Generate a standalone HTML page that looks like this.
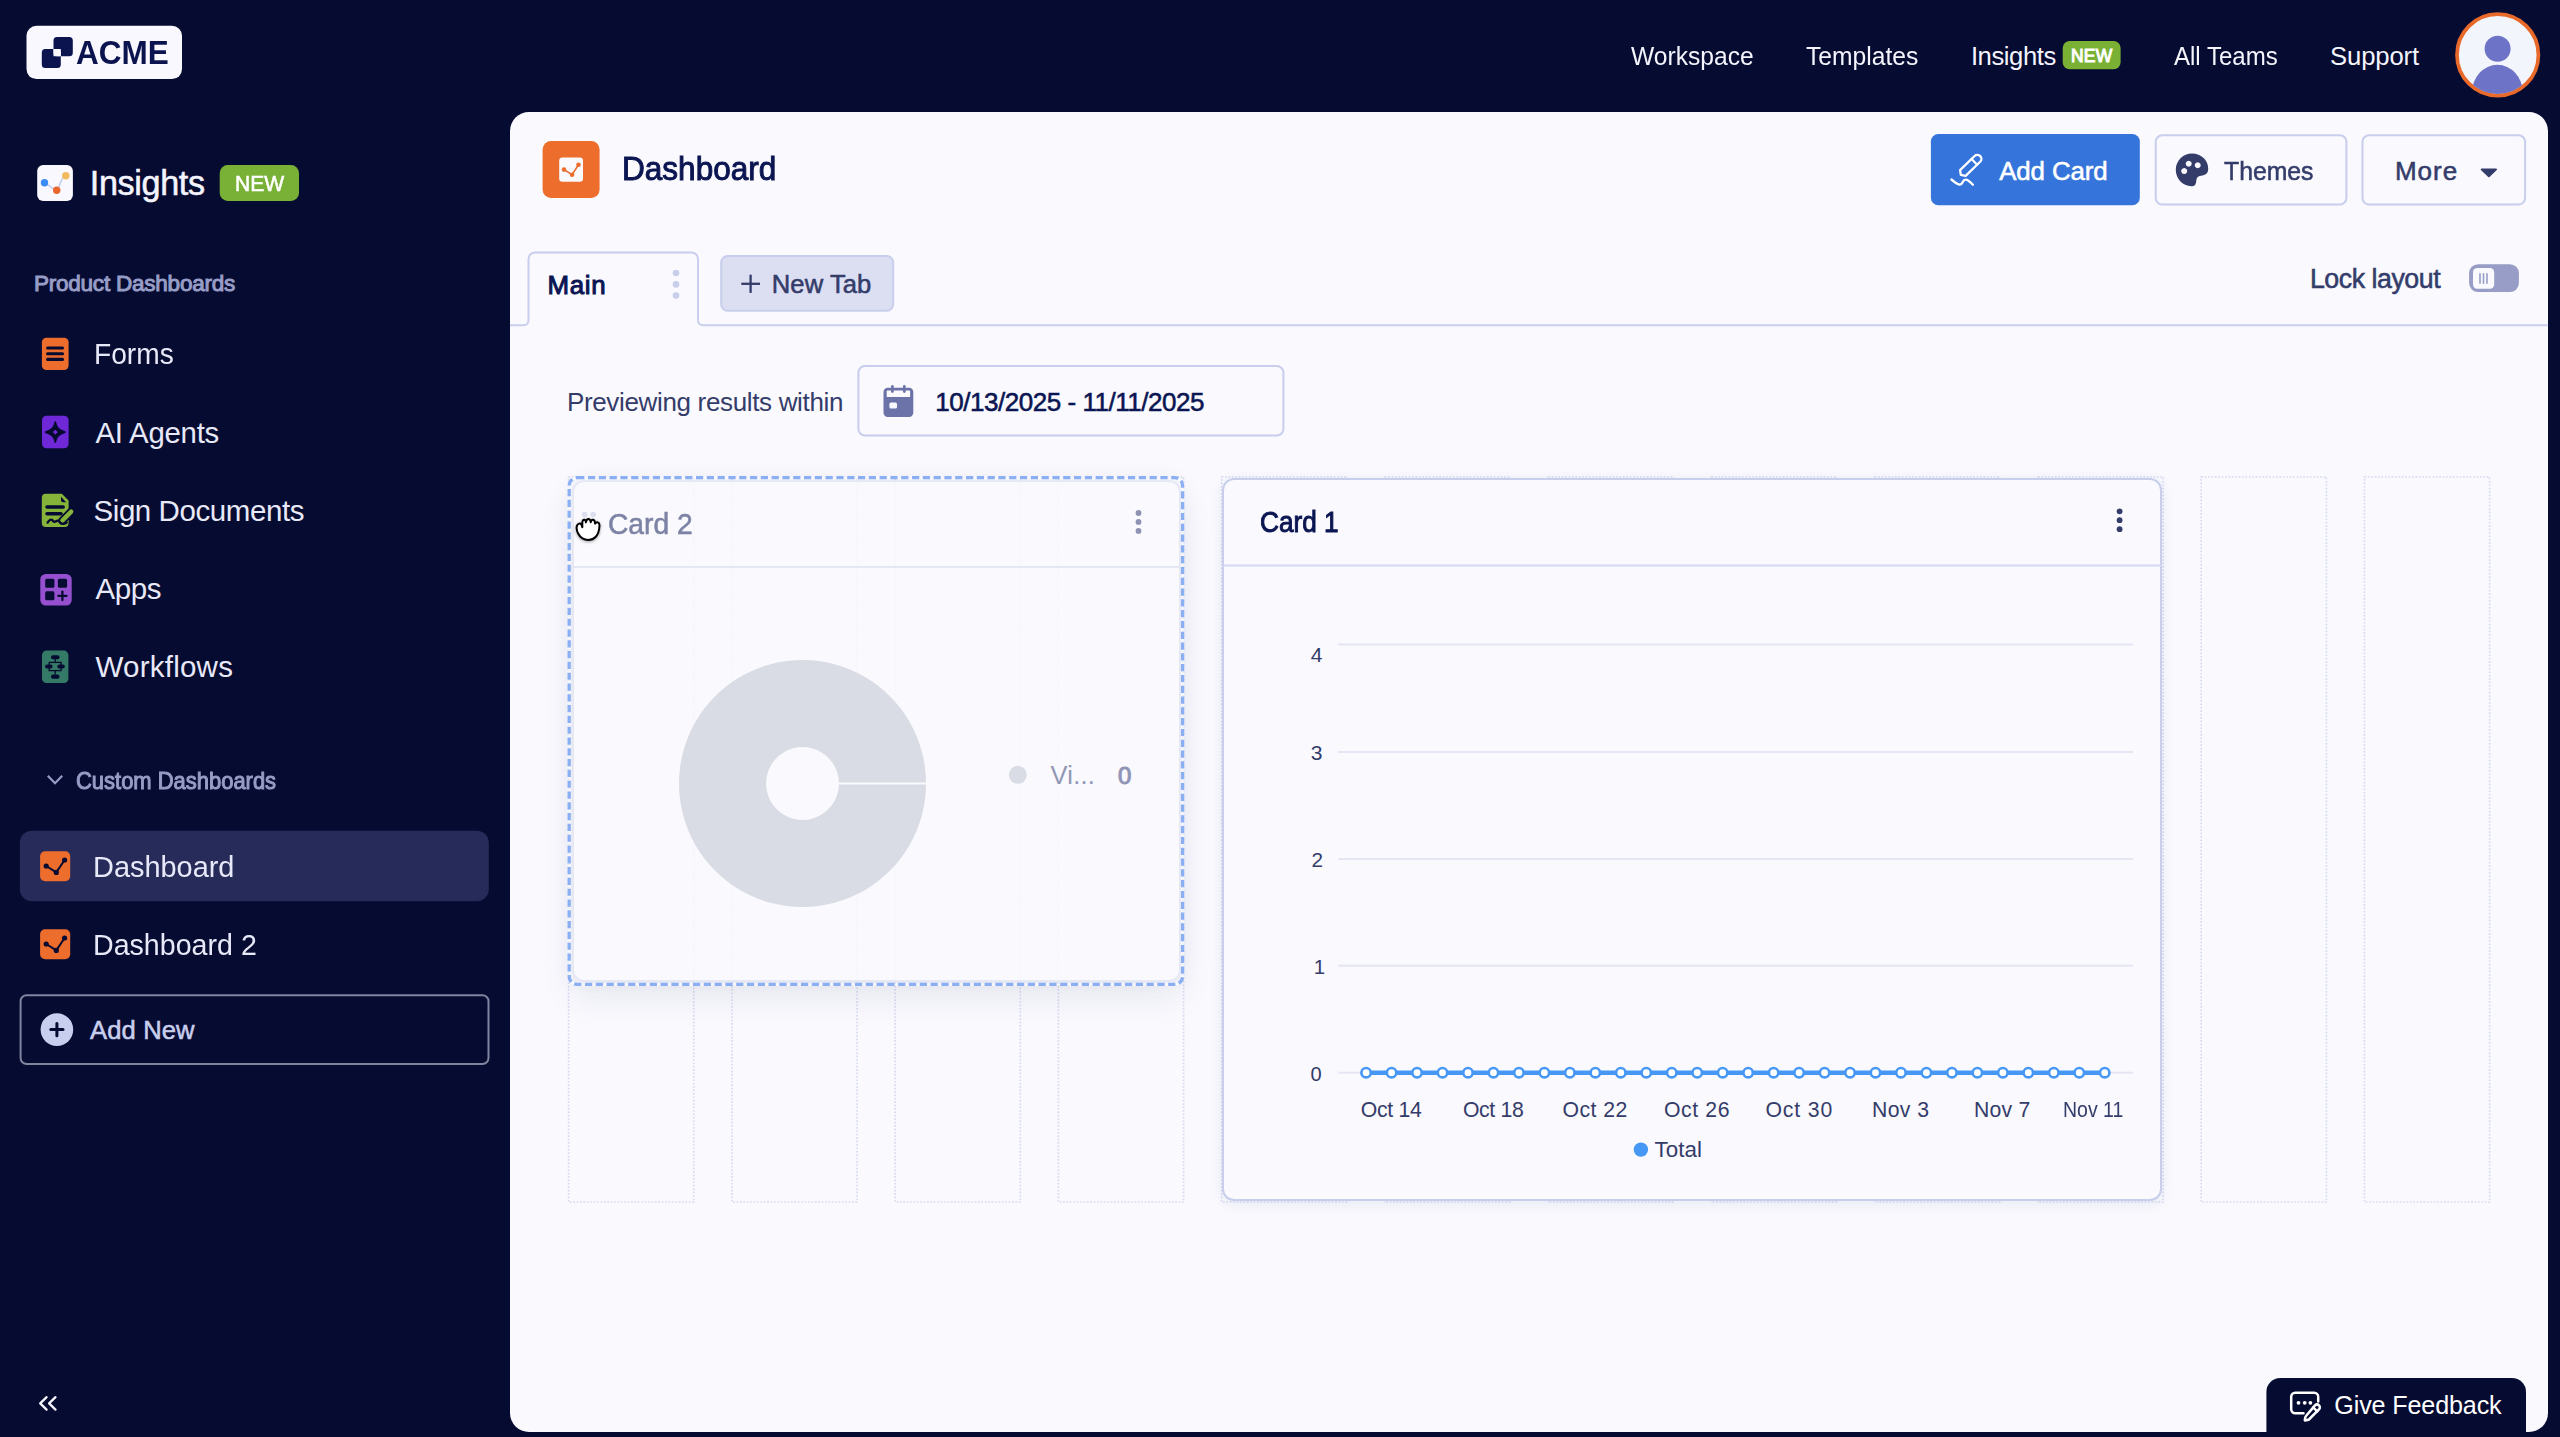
<!DOCTYPE html>
<html><head><meta charset="utf-8"><title>Dashboard</title>
<style>
html,body{margin:0;padding:0;}
body{width:2560px;height:1437px;overflow:hidden;position:relative;background:#060B31;font-family:"Liberation Sans",sans-serif;}
.t{position:absolute;white-space:pre;}
.s{position:absolute;overflow:visible;}
.panel{position:absolute;left:510.4px;top:112px;width:2037.2px;height:1319.6px;background:#F9F9FE;border-radius:19px;}
.col{position:absolute;top:476.2px;height:726.6px;box-sizing:border-box;border:2px dotted #DADDF0;}
.card1{position:absolute;left:1222.2px;top:477.8px;width:939.5px;height:723.4px;box-sizing:border-box;border:2px solid #C8CEEC;border-radius:12px;background:#F9F9FE;box-shadow:0 3px 14px rgba(40,50,110,0.08);}
.c2shadow{position:absolute;left:571.8px;top:480.2px;width:608.8px;height:502.2px;border-radius:12px;box-shadow:0 16px 36px rgba(30,35,80,0.07), 0 0 24px rgba(30,35,80,0.05);}
.c2wrap{position:absolute;left:0;top:0;width:2560px;height:1437px;opacity:0.5;}
.card2bg{position:absolute;left:571.8px;top:480.2px;width:608.8px;height:502.2px;box-sizing:border-box;border:2px solid #E6E8F5;border-radius:12px;background:rgba(249,249,254,0.85);}
</style></head>
<body>
<svg class="s" style="left:0px;top:0px;" width="520" height="110" viewBox="0 0 520 110">
<rect x="26.5" y="25.8" width="155.5" height="53.3" rx="10" fill="#F8F8FE"/>
<path fill-rule="evenodd" fill="#0C1450" d="M45.3 49 h12 a3.5 3.5 0 0 1 3.5 3.5 V64.5 a3.5 3.5 0 0 1 -3.5 3.5 h-12 a3.5 3.5 0 0 1 -3.5 -3.5 V52.5 a3.5 3.5 0 0 1 3.5 -3.5 Z
M57 37 h12.3 a3.5 3.5 0 0 1 3.5 3.5 V52.7 a3.5 3.5 0 0 1 -3.5 3.5 H57 a3.5 3.5 0 0 1 -3.5 -3.5 V40.5 a3.5 3.5 0 0 1 3.5 -3.5 Z"/>
<rect x="53.5" y="49" width="7.3" height="7.2" fill="#F8F8FE"/>
</svg>
<div class="t" style="left:75.84px;top:37.31px;font-size:32.849px;line-height:32.849px;letter-spacing:0.000px;color:#0C1450;font-weight:bold;transform:scaleX(0.9596);transform-origin:0 0;">ACME</div>
<div class="t" style="left:1630.60px;top:43.56px;font-size:25.655px;line-height:25.655px;letter-spacing:0.000px;color:#F4F4FD;font-weight:normal;transform:scaleX(0.9598);transform-origin:0 0;">Workspace</div>
<div class="t" style="left:1806.04px;top:43.56px;font-size:25.655px;line-height:25.655px;letter-spacing:0.000px;color:#F4F4FD;font-weight:normal;transform:scaleX(0.9609);transform-origin:0 0;">Templates</div>
<div class="t" style="left:1970.90px;top:43.56px;font-size:25.655px;line-height:25.655px;letter-spacing:-0.429px;color:#F4F4FD;font-weight:normal;">Insights</div>
<div class="t" style="left:2174.40px;top:43.56px;font-size:25.655px;line-height:25.655px;letter-spacing:0.000px;color:#F4F4FD;font-weight:normal;transform:scaleX(0.9373);transform-origin:0 0;">All Teams</div>
<div class="t" style="left:2330.00px;top:43.56px;font-size:25.655px;line-height:25.655px;letter-spacing:-0.117px;color:#F4F4FD;font-weight:normal;">Support</div>
<svg class="s" style="left:2040px;top:0px;" width="520" height="110" viewBox="2040 0 520 110">
<rect x="2062.7" y="41" width="57.9" height="28.2" rx="7" fill="#7AB134"/>
<circle cx="2497.7" cy="54.9" r="40.7" fill="#F3F5FC" stroke="#E8692A" stroke-width="3.7"/>
<clipPath id="avc"><circle cx="2497.7" cy="54.9" r="39"/></clipPath>
<g clip-path="url(#avc)" fill="#6D73C6">
<circle cx="2497.6" cy="48.8" r="13"/>
<ellipse cx="2497.4" cy="92.6" rx="25.4" ry="27.8"/>
</g>
</svg>
<div class="t" style="left:2070.90px;top:47.56px;font-size:17.442px;line-height:17.442px;letter-spacing:0.300px;color:#FFFFFF;font-weight:normal;-webkit-text-stroke:1.0px #FFFFFF;">NEW</div>
<svg class="s" style="left:0px;top:150px;" width="520" height="560" viewBox="0 150 520 560">
<rect x="37.2" y="165.1" width="35.7" height="35.8" rx="6" fill="#F8F8FE"/>
<path d="M44.5 182.8 C48.5 184.2 53 190.4 56.7 190.2 C59.8 190 59.8 177.2 65.8 175.7" fill="none" stroke="#C8CEED" stroke-width="1.6"/>
<circle cx="44.5" cy="182.8" r="3.7" fill="#3C8CF6"/>
<circle cx="56.7" cy="190.2" r="3.7" fill="#E9672C"/>
<circle cx="65.8" cy="175.7" r="3.7" fill="#F2BA5C"/>
<rect x="219.7" y="165.1" width="79.3" height="35.8" rx="8" fill="#78B135"/>
<!-- forms -->
<rect x="41.9" y="337.8" width="26.7" height="32.2" rx="4.5" fill="#EC6D2C"/>
<g stroke="#060B31" stroke-width="3.1" stroke-linecap="round">
<line x1="47.6" y1="348" x2="62.5" y2="348"/><line x1="47.6" y1="353.7" x2="62.5" y2="353.7"/><line x1="47.6" y1="359.4" x2="62.5" y2="359.4"/>
</g>
<!-- ai agents -->
<rect x="42" y="415.8" width="26.6" height="32.4" rx="4.5" fill="#6F28D8"/>
<path fill-rule="evenodd" fill="#060B31" stroke="#060B31" stroke-width="1.8" stroke-linejoin="round" d="M55.3 422.2 C56.3 427.6 58.2 429.8 64.9 432.1 C58.2 434.4 56.3 436.6 55.3 442 C54.3 436.6 52.4 434.4 45.7 432.1 C52.4 429.8 54.3 427.6 55.3 422.2 Z M55.3 428.4 L59 432.1 L55.3 435.8 L51.6 432.1 Z"/>
<!-- sign documents -->
<path fill="#86B43A" d="M45.8 493.8 H61.8 L68.6 500.6 V522.9 a4 4 0 0 1 -4 4 H45.8 a4 4 0 0 1 -4 -4 V497.8 a4 4 0 0 1 4 -4 Z"/>
<path fill="#060B31" d="M61 496.8 L66.2 502.2 L63 502.2 a2 2 0 0 1 -2 -2 Z"/>
<g stroke="#060B31" stroke-width="3.5" stroke-linecap="round" fill="none">
<line x1="47" y1="507" x2="63.2" y2="507"/><line x1="47" y1="513.7" x2="61" y2="513.7"/>
</g>
<line x1="62.3" y1="520.6" x2="71.2" y2="511.6" stroke="#060B31" stroke-width="8" stroke-linecap="round"/>
<line x1="62.3" y1="520.6" x2="71.2" y2="511.6" stroke="#86B43A" stroke-width="4.4" stroke-linecap="round"/>
<path d="M47.6 522.6 Q50 518.6 52.3 520 Q53.6 522.8 56 521.3 Q58.6 519.6 60.4 522.8 Q62.6 525 66.6 522.6" fill="none" stroke="#060B31" stroke-width="2.4" stroke-linecap="round"/>
<!-- apps -->
<rect x="40.3" y="574" width="31.4" height="31.6" rx="5.5" fill="#9550D0"/>
<g fill="#060B31">
<rect x="45.2" y="578.7" width="9.2" height="9.1" rx="1.6"/>
<rect x="57.9" y="578.7" width="9.2" height="9.1" rx="1.6"/>
<rect x="45.2" y="591.3" width="9.2" height="9" rx="1.6"/>
</g>
<g stroke="#060B31" stroke-width="2.3" stroke-linecap="round">
<line x1="58.3" y1="595.8" x2="66.6" y2="595.8"/><line x1="62.4" y1="591.6" x2="62.4" y2="600"/>
</g>
<!-- workflows -->
<rect x="42" y="650.6" width="26.4" height="32.5" rx="4.5" fill="#347A66"/>
<g fill="#060B31">
<rect x="51" y="655.3" width="8.5" height="3.9" rx="1.9"/>
<rect x="45.1" y="664.4" width="7.5" height="4.1" rx="2"/>
<rect x="57.3" y="664.4" width="7.5" height="4.1" rx="2"/>
<rect x="51" y="674.5" width="8.5" height="4.2" rx="2"/>
</g>
<g stroke="#060B31" stroke-width="1.3" fill="none">
<line x1="55.2" y1="659" x2="55.2" y2="662.5"/>
<rect x="49.2" y="662.4" width="11.9" height="8.2"/>
<line x1="55.2" y1="670.6" x2="55.2" y2="674.6"/>
</g>
</svg>
<div class="t" style="left:89.80px;top:165.96px;font-size:34.158px;line-height:34.158px;letter-spacing:-0.343px;color:#F4F4FD;font-weight:normal;-webkit-text-stroke:0.55px #F4F4FD;">Insights</div>
<div class="t" style="left:234.63px;top:172.95px;font-size:21.657px;line-height:21.657px;letter-spacing:0.000px;color:#FFFFFF;font-weight:normal;-webkit-text-stroke:0.55px #FFFFFF;transform:scaleX(0.9740);transform-origin:0 0;">NEW</div>
<div class="t" style="left:33.90px;top:272.76px;font-size:22.529px;line-height:22.529px;letter-spacing:-0.224px;color:#979DC6;font-weight:normal;-webkit-text-stroke:1.0px #979DC6;">Product Dashboards</div>
<div class="t" style="left:93.59px;top:339.26px;font-size:29.506px;line-height:29.506px;letter-spacing:0.000px;color:#E8E9F8;font-weight:normal;transform:scaleX(0.9543);transform-origin:0 0;">Forms</div>
<div class="t" style="left:95.50px;top:418.06px;font-size:29.361px;line-height:29.361px;letter-spacing:-0.238px;color:#E8E9F8;font-weight:normal;">AI Agents</div>
<div class="t" style="left:93.50px;top:495.66px;font-size:29.506px;line-height:29.506px;letter-spacing:-0.423px;color:#E8E9F8;font-weight:normal;">Sign Documents</div>
<div class="t" style="left:95.50px;top:574.26px;font-size:29.506px;line-height:29.506px;letter-spacing:-0.433px;color:#E8E9F8;font-weight:normal;">Apps</div>
<div class="t" style="left:95.50px;top:652.26px;font-size:29.506px;line-height:29.506px;letter-spacing:0.238px;color:#E8E9F8;font-weight:normal;">Workflows</div>
<svg class="s" style="left:0px;top:740px;" width="520" height="700" viewBox="0 740 520 700">
<polyline points="47.8,775.8 55,783.2 62.2,775.8" fill="none" stroke="#979DC6" stroke-width="2.2"/>
<rect x="19.8" y="830.8" width="469" height="70.4" rx="12" fill="#262B59"/>
<rect x="40.1" y="851.2" width="30.1" height="30" rx="5" fill="#EC6D2C"/>
<polyline points="46.2,866.0 56.3,872.4000000000001 64.6,860.0" fill="none" stroke="#060B31" stroke-width="2"/>
<circle cx="46.2" cy="866.0" r="2.6" fill="#060B31"/><circle cx="56.3" cy="872.4000000000001" r="2.6" fill="#060B31"/><circle cx="64.6" cy="860.0" r="2.6" fill="#060B31"/>
<rect x="40.1" y="929.2" width="30.1" height="30" rx="5" fill="#EC6D2C"/>
<polyline points="46.2,944.0 56.3,950.4000000000001 64.6,938.0" fill="none" stroke="#060B31" stroke-width="2"/>
<circle cx="46.2" cy="944.0" r="2.6" fill="#060B31"/><circle cx="56.3" cy="950.4000000000001" r="2.6" fill="#060B31"/><circle cx="64.6" cy="938.0" r="2.6" fill="#060B31"/>
<rect x="20.6" y="995.2" width="467.9" height="68.8" rx="6" fill="none" stroke="#80849F" stroke-width="2"/>
<circle cx="56.9" cy="1029.6" r="16.3" fill="#C8CEED"/>
<g stroke="#060B31" stroke-width="3" stroke-linecap="round">
<line x1="50.8" y1="1029.6" x2="63" y2="1029.6"/><line x1="56.9" y1="1023.5" x2="56.9" y2="1035.7"/>
</g>
<g fill="none" stroke="#F4F4FD" stroke-width="2.3" stroke-linecap="round" stroke-linejoin="round">
<polyline points="46.6,1397.2 40.2,1403.4 46.6,1409.6"/>
<polyline points="55.5,1397.2 49.1,1403.4 55.5,1409.6"/>
</g>
</svg>
<div class="t" style="left:76.46px;top:770.06px;font-size:23.256px;line-height:23.256px;letter-spacing:0.000px;color:#979DC6;font-weight:normal;-webkit-text-stroke:1.0px #979DC6;transform:scaleX(0.9441);transform-origin:0 0;">Custom Dashboards</div>
<div class="t" style="left:92.93px;top:852.06px;font-size:30.233px;line-height:30.233px;letter-spacing:0.000px;color:#E8E9F8;font-weight:normal;transform:scaleX(0.9566);transform-origin:0 0;">Dashboard</div>
<div class="t" style="left:92.96px;top:929.66px;font-size:30.233px;line-height:30.233px;letter-spacing:0.000px;color:#E8E9F8;font-weight:normal;transform:scaleX(0.9467);transform-origin:0 0;">Dashboard 2</div>
<div class="t" style="left:90.00px;top:1018.26px;font-size:25.582px;line-height:25.582px;letter-spacing:0.133px;color:#C8CEED;font-weight:normal;-webkit-text-stroke:0.55px #C8CEED;">Add New</div>
<div class="panel"></div>
<svg class="s" style="left:530px;top:130px;" width="1000" height="90" viewBox="530 130 1000 90">
<rect x="542.6" y="141.1" width="57" height="57" rx="8.5" fill="#EC6D2C"/>
<rect x="559.2" y="157.6" width="23.8" height="24.2" rx="3.2" fill="#F9F9FE"/>
<polyline points="564,169.6 572.1,174.7 578.5,164.7" fill="none" stroke="#EC6D2C" stroke-width="1.6"/>
<circle cx="564" cy="169.6" r="2.3" fill="#EC6D2C"/><circle cx="572.1" cy="174.7" r="2.3" fill="#EC6D2C"/><circle cx="578.5" cy="164.7" r="2.3" fill="#EC6D2C"/>
</svg>
<div class="t" style="left:621.52px;top:152.36px;font-size:33.576px;line-height:33.576px;letter-spacing:0.000px;color:#0A1551;font-weight:normal;-webkit-text-stroke:1.0px #0A1551;transform:scaleX(0.9398);transform-origin:0 0;">Dashboard</div>
<svg class="s" style="left:1920px;top:125px;" width="640" height="100" viewBox="1920 125 640 100">
<rect x="1930.9" y="134" width="208.9" height="71.2" rx="7.5" fill="#3574DA"/>
<g fill="none" stroke="#FFFFFF" stroke-width="2.3" stroke-linecap="round" stroke-linejoin="round">
<g transform="translate(1960.4 175.3) rotate(-44)">
<path d="M0.6 0 L3.4 -4 H23.6 a4 4 0 0 1 0 8 H3.4 Z"/>
<line x1="19.4" y1="-4" x2="19.4" y2="4"/>
</g>
<path d="M1951.4 179.5 C1955 182.5 1957.8 184.8 1960 184.6 C1962.8 184.4 1962.6 179.8 1965.4 179.6 C1967.6 179.4 1970.5 182.2 1972.9 184.7"/>
</g>
<rect x="2155.7" y="135.3" width="190.7" height="69.2" rx="6.5" fill="none" stroke="#C8CEEC" stroke-width="2"/>
<path fill="#343C6A" fill-rule="evenodd" d="M2192 153.5 C2201.5 153.5 2208.2 160.5 2208.2 168.5 C2208.2 173.6 2205.5 175.2 2201 175.8 C2197.8 176.3 2196.6 177.6 2196.2 181.4 C2195.7 185.2 2194.3 186.2 2191.6 186.2 C2182.3 186 2175.8 178.7 2175.8 169.8 C2175.8 160.8 2183 153.5 2192 153.5 Z
M2188.7 160.8 a3 3 0 1 0 0.01 0 Z M2197.7 162.3 a3 3 0 1 0 0.01 0 Z M2184.2 168.1 a3 3 0 1 0 0.01 0 Z"/>
<rect x="2362.5" y="135.3" width="162.6" height="69.2" rx="6.5" fill="none" stroke="#C8CEEC" stroke-width="2"/>
<path d="M2481.5 168.6 H2496.2 a0.8 0.8 0 0 1 0.6 1.3 L2489.5 177 a0.9 0.9 0 0 1 -1.3 0 L2480.9 169.9 a0.8 0.8 0 0 1 0.6 -1.3 Z" fill="#343C6A"/>
</svg>
<div class="t" style="left:1999.20px;top:158.56px;font-size:25.873px;line-height:25.873px;letter-spacing:-0.100px;color:#FFFFFF;font-weight:normal;-webkit-text-stroke:0.55px #FFFFFF;">Add Card</div>
<div class="t" style="left:2224.40px;top:157.56px;font-size:26.018px;line-height:26.018px;letter-spacing:0.000px;color:#343C6A;font-weight:normal;-webkit-text-stroke:0.55px #343C6A;transform:scaleX(0.9527);transform-origin:0 0;">Themes</div>
<div class="t" style="left:2394.90px;top:157.56px;font-size:26.018px;line-height:26.018px;letter-spacing:1.000px;color:#343C6A;font-weight:normal;-webkit-text-stroke:0.55px #343C6A;">More</div>
<svg class="s" style="left:510px;top:240px;" width="2040" height="90" viewBox="510 240 2040 90">
<path d="M510 325.2 H523.5 a5 5 0 0 0 5 -5 V259 a6.5 6.5 0 0 1 6.5 -6.5 H691.5 a6.5 6.5 0 0 1 6.5 6.5 V320.2 a5 5 0 0 0 5 5 H2547.5" fill="none" stroke="#C8CEEC" stroke-width="2"/>
<g fill="#C8CEEC"><circle cx="676" cy="273" r="3.3"/><circle cx="676" cy="284.4" r="3.3"/><circle cx="676" cy="295.6" r="3.3"/></g>
<rect x="721.2" y="256" width="172" height="54.8" rx="6.5" fill="#DCDFF2" stroke="#C8CEEC" stroke-width="2"/>
<g stroke="#343C6A" stroke-width="2.3" stroke-linecap="butt">
<line x1="741.3" y1="283.8" x2="760" y2="283.8"/><line x1="750.6" y1="274.7" x2="750.6" y2="292.9"/>
</g>
<rect x="2469.1" y="264.2" width="49.8" height="27.9" rx="9" fill="#979DC6"/>
<rect x="2473" y="268" width="21.2" height="20.8" rx="4.2" fill="#F9F9FE"/>
<g stroke="#979DC6" stroke-width="1.6"><line x1="2480" y1="273.2" x2="2480" y2="283.8"/><line x1="2483.5" y1="273.2" x2="2483.5" y2="283.8"/><line x1="2487" y1="273.2" x2="2487" y2="283.8"/></g>
</svg>
<div class="t" style="left:547.50px;top:273.06px;font-size:25.873px;line-height:25.873px;letter-spacing:0.667px;color:#0A1551;font-weight:normal;-webkit-text-stroke:1.0px #0A1551;">Main</div>
<div class="t" style="left:771.80px;top:272.46px;font-size:25.582px;line-height:25.582px;letter-spacing:0.083px;color:#343C6A;font-weight:normal;-webkit-text-stroke:0.55px #343C6A;">New Tab</div>
<div class="t" style="left:2309.90px;top:266.26px;font-size:26.745px;line-height:26.745px;letter-spacing:-0.450px;color:#343C6A;font-weight:normal;-webkit-text-stroke:0.55px #343C6A;">Lock layout</div>
<svg class="s" style="left:850px;top:360px;" width="450" height="80" viewBox="850 360 450 80">
<rect x="858.4" y="366.1" width="425" height="69.3" rx="6.5" fill="none" stroke="#C8CEEC" stroke-width="2"/>
<path fill="#6C73A8" fill-rule="evenodd" d="M887.7 387.8 H909.1 a4.2 4.2 0 0 1 4.2 4.2 V412.8 a4.2 4.2 0 0 1 -4.2 4.2 H887.7 a4.2 4.2 0 0 1 -4.2 -4.2 V392 a4.2 4.2 0 0 1 4.2 -4.2 Z
M887.6 390.4 H909.2 a0.9 0.9 0 0 1 0.9 0.9 V396.9 H886.7 V391.3 a0.9 0.9 0 0 1 0.9 -0.9 Z
M890.9 402.5 H895.5 a1.5 1.5 0 0 1 1.5 1.5 V406.9 a1.5 1.5 0 0 1 -1.5 1.5 H890.9 a1.5 1.5 0 0 1 -1.5 -1.5 V404 a1.5 1.5 0 0 1 1.5 -1.5 Z"/>
<g stroke="#6C73A8" stroke-width="2.7" stroke-linecap="round"><line x1="892.4" y1="386.4" x2="892.4" y2="391.6"/><line x1="904.3" y1="386.4" x2="904.3" y2="391.6"/></g>
</svg>
<div class="t" style="left:566.90px;top:388.56px;font-size:26.018px;line-height:26.018px;letter-spacing:-0.338px;color:#343C6A;font-weight:normal;">Previewing results within</div>
<div class="t" style="left:935.20px;top:388.56px;font-size:26.018px;line-height:26.018px;letter-spacing:-0.464px;color:#0A1551;font-weight:normal;-webkit-text-stroke:0.55px #0A1551;">10/13/2025 - 11/11/2025</div>
<svg class="s" style="left:550px;top:460px;" width="1960" height="760" viewBox="550 460 1960 760"><g fill="none" stroke="#D6DAEE" stroke-width="1.6" stroke-dasharray="1.7 1.7"><rect x="568.60" y="477" width="125.20" height="725" /><rect x="731.86" y="477" width="125.20" height="725" /><rect x="895.12" y="477" width="125.20" height="725" /><rect x="1058.38" y="477" width="125.20" height="725" /><rect x="1221.64" y="477" width="125.20" height="725" /><rect x="1384.90" y="477" width="125.20" height="725" /><rect x="1548.16" y="477" width="125.20" height="725" /><rect x="1711.42" y="477" width="125.20" height="725" /><rect x="1874.68" y="477" width="125.20" height="725" /><rect x="2037.94" y="477" width="125.20" height="725" /><rect x="2201.20" y="477" width="125.20" height="725" /><rect x="2364.46" y="477" width="125.20" height="725" /></g></svg>
<div class="card1"></div>
<svg class="s" style="left:1222px;top:478px;" width="942" height="724" viewBox="1222 478 942 724">
<line x1="1223" y1="565.4" x2="2161" y2="565.4" stroke="#D5DAF0" stroke-width="2"/>
<g fill="#343C6A"><circle cx="2119.6" cy="511.3" r="2.9"/><circle cx="2119.6" cy="520.2" r="2.9"/><circle cx="2119.6" cy="529.2" r="2.9"/></g>
<g stroke="#E4E6F4" stroke-width="2"><line x1="1338.1" y1="644.5" x2="2133" y2="644.5"/><line x1="1338.1" y1="752" x2="2133" y2="752"/><line x1="1338.1" y1="858.9" x2="2133" y2="858.9"/><line x1="1338.1" y1="965.7" x2="2133" y2="965.7"/><line x1="1338.1" y1="1072.7" x2="2133" y2="1072.7"/></g>
<line x1="1366.10" y1="1072.7" x2="2104.73" y2="1072.7" stroke="#4797F5" stroke-width="4.6"/>
<g fill="#FFFFFF" stroke="#4797F5" stroke-width="2.6"><circle cx="1366.10" cy="1072.7" r="4.7"/><circle cx="1391.57" cy="1072.7" r="4.7"/><circle cx="1417.04" cy="1072.7" r="4.7"/><circle cx="1442.51" cy="1072.7" r="4.7"/><circle cx="1467.98" cy="1072.7" r="4.7"/><circle cx="1493.45" cy="1072.7" r="4.7"/><circle cx="1518.92" cy="1072.7" r="4.7"/><circle cx="1544.39" cy="1072.7" r="4.7"/><circle cx="1569.86" cy="1072.7" r="4.7"/><circle cx="1595.33" cy="1072.7" r="4.7"/><circle cx="1620.80" cy="1072.7" r="4.7"/><circle cx="1646.27" cy="1072.7" r="4.7"/><circle cx="1671.74" cy="1072.7" r="4.7"/><circle cx="1697.21" cy="1072.7" r="4.7"/><circle cx="1722.68" cy="1072.7" r="4.7"/><circle cx="1748.15" cy="1072.7" r="4.7"/><circle cx="1773.62" cy="1072.7" r="4.7"/><circle cx="1799.09" cy="1072.7" r="4.7"/><circle cx="1824.56" cy="1072.7" r="4.7"/><circle cx="1850.03" cy="1072.7" r="4.7"/><circle cx="1875.50" cy="1072.7" r="4.7"/><circle cx="1900.97" cy="1072.7" r="4.7"/><circle cx="1926.44" cy="1072.7" r="4.7"/><circle cx="1951.91" cy="1072.7" r="4.7"/><circle cx="1977.38" cy="1072.7" r="4.7"/><circle cx="2002.85" cy="1072.7" r="4.7"/><circle cx="2028.32" cy="1072.7" r="4.7"/><circle cx="2053.79" cy="1072.7" r="4.7"/><circle cx="2079.26" cy="1072.7" r="4.7"/><circle cx="2104.73" cy="1072.7" r="4.7"/></g>
<circle cx="1640.9" cy="1149.6" r="7.2" fill="#4797F5"/>
</svg>
<div class="t" style="left:1259.73px;top:507.46px;font-size:30.233px;line-height:30.233px;letter-spacing:0.000px;color:#0A1551;font-weight:normal;-webkit-text-stroke:1.0px #0A1551;transform:scaleX(0.8674);transform-origin:0 0;">Card 1</div>
<div class="t" style="left:1310.70px;top:644.46px;font-size:21.076px;line-height:21.076px;letter-spacing:0.000px;color:#343C6A;font-weight:normal;">4</div>
<div class="t" style="left:1310.70px;top:742.46px;font-size:21.076px;line-height:21.076px;letter-spacing:0.000px;color:#343C6A;font-weight:normal;">3</div>
<div class="t" style="left:1311.60px;top:849.86px;font-size:20.785px;line-height:20.785px;letter-spacing:0.000px;color:#343C6A;font-weight:normal;">2</div>
<div class="t" style="left:1313.70px;top:957.26px;font-size:20.495px;line-height:20.495px;letter-spacing:0.000px;color:#343C6A;font-weight:normal;">1</div>
<div class="t" style="left:1310.50px;top:1064.06px;font-size:20.058px;line-height:20.058px;letter-spacing:0.000px;color:#343C6A;font-weight:normal;">0</div>
<div class="t" style="left:1360.80px;top:1099.16px;font-size:21.221px;line-height:21.221px;letter-spacing:-0.280px;color:#343C6A;font-weight:normal;">Oct 14</div>
<div class="t" style="left:1462.90px;top:1099.16px;font-size:21.221px;line-height:21.221px;letter-spacing:-0.340px;color:#343C6A;font-weight:normal;">Oct 18</div>
<div class="t" style="left:1562.50px;top:1099.16px;font-size:21.221px;line-height:21.221px;letter-spacing:0.460px;color:#343C6A;font-weight:normal;">Oct 22</div>
<div class="t" style="left:1664.00px;top:1099.16px;font-size:21.221px;line-height:21.221px;letter-spacing:0.600px;color:#343C6A;font-weight:normal;">Oct 26</div>
<div class="t" style="left:1765.40px;top:1099.16px;font-size:21.221px;line-height:21.221px;letter-spacing:0.860px;color:#343C6A;font-weight:normal;">Oct 30</div>
<div class="t" style="left:1872.00px;top:1099.16px;font-size:21.221px;line-height:21.221px;letter-spacing:0.375px;color:#343C6A;font-weight:normal;">Nov 3</div>
<div class="t" style="left:1974.00px;top:1099.16px;font-size:21.221px;line-height:21.221px;letter-spacing:0.200px;color:#343C6A;font-weight:normal;">Nov 7</div>
<div class="t" style="left:2062.86px;top:1099.16px;font-size:21.221px;line-height:21.221px;letter-spacing:0.000px;color:#343C6A;font-weight:normal;transform:scaleX(0.9190);transform-origin:0 0;">Nov 11</div>
<div class="t" style="left:1654.60px;top:1139.46px;font-size:22.384px;line-height:22.384px;letter-spacing:0.000px;color:#343C6A;font-weight:normal;">Total</div>
<div class="c2shadow"></div>
<div class="card2bg"></div>
<svg class="s" style="left:560px;top:470px;" width="640" height="530" viewBox="560 470 640 530">
<line x1="573" y1="567" x2="1181" y2="567" stroke="#E4E7F4" stroke-width="2"/>
<g fill="#8E93B3"><circle cx="1138.5" cy="513" r="2.9"/><circle cx="1138.5" cy="521.9" r="2.9"/><circle cx="1138.5" cy="530.9" r="2.9"/></g>
<g fill="#DCDFF0"><circle cx="584.6" cy="514.6" r="2.8"/><circle cx="593.2" cy="514.6" r="2.8"/><circle cx="584.6" cy="523.4" r="2.8"/><circle cx="593.2" cy="523.4" r="2.8"/><circle cx="584.6" cy="532.2" r="2.8"/><circle cx="593.2" cy="532.2" r="2.8"/></g>
<path fill-rule="evenodd" fill="#D9DCE4" d="M802.5 660 a123.5 123.5 0 1 0 0.01 0 Z M802.5 747.1 a36.4 36.4 0 1 0 0.01 0 Z"/>
<line x1="838.5" y1="783.5" x2="927" y2="783.5" stroke="#F9F9FE" stroke-width="2.2"/>
<circle cx="1017.8" cy="774.8" r="9" fill="#D9DCE4"/>
</svg>
<div class="t" style="left:608.45px;top:509.06px;font-size:29.652px;line-height:29.652px;letter-spacing:0.000px;color:#7D83A5;font-weight:normal;-webkit-text-stroke:0.55px #7D83A5;transform:scaleX(0.9517);transform-origin:0 0;">Card 2</div>
<div class="t" style="left:1050.60px;top:763.16px;font-size:25.436px;line-height:25.436px;letter-spacing:0.250px;color:#9297B5;font-weight:normal;">Vi...</div>
<div class="t" style="left:1118.00px;top:764.16px;font-size:23.983px;line-height:23.983px;letter-spacing:0.000px;color:#8F94B5;font-weight:normal;-webkit-text-stroke:1.0px #8F94B5;">0</div>
<svg class="s" style="left:560px;top:470px;" width="640" height="525" viewBox="560 470 640 525">
<rect x="569.2" y="477.6" width="613.4" height="506.8" rx="8" fill="none" stroke="#FFFFFF" stroke-width="3.4" opacity="0.6"/><rect x="569.2" y="477.6" width="613.4" height="506.8" rx="8" fill="none" stroke="#8AAFF3" stroke-width="3.3" stroke-dasharray="7.2 3.6"/>
</svg>
<svg class="s" style="left:570px;top:512px;filter:drop-shadow(0 1.5px 1.5px rgba(0,0,0,0.35));" width="36" height="36" viewBox="570 512 36 36">
<path d="M582.3 527.2 L582.3 523 Q582.5 519.6 584.3 519.8 Q585.8 520 585.9 522.4 Q586.6 519 588.4 519.1 Q590.3 519.2 590.7 522.2 Q591.4 519.5 593.1 519.8 Q595 520.2 595.1 523.6 Q596.2 522 597.8 522.4 Q599.6 523 599.5 525.5 C599.3 530 598.4 534 595.8 536.8 C593.5 539.2 590.8 540 588.3 540 C583.8 540 580.2 537.4 578.3 533.8 C576.6 530.6 576.2 527.8 577 525.6 C577.8 523.4 580.3 522.9 581.4 524.4 Z" fill="#FFFFFF" stroke="#000000" stroke-width="2" stroke-linejoin="round"/>
</svg>
<svg class="s" style="left:2260px;top:1370px;" width="300" height="67" viewBox="2260 1370 300 67">
<path d="M2266.4 1437 V1392 a14 14 0 0 1 14 -14 H2512 a14 14 0 0 1 14 14 V1437 Z" fill="#060B31"/>
<g fill="none" stroke="#FFFFFF" stroke-width="2.5" stroke-linecap="round" stroke-linejoin="round">
<path d="M2303.5 1413.2 H2295.2 a4 4 0 0 1 -4 -4 V1396.7 a4 4 0 0 1 4 -4 H2314.2 a4 4 0 0 1 4 4 V1401.6"/>
<path d="M2315 1405.4 a2.8 2.8 0 0 1 4 4 L2309.4 1419 a3.6 3.6 0 0 1 -2 1 l-2.6 0.4 l0.4 -2.6 a3.6 3.6 0 0 1 1 -2 Z"/>
<line x1="2313.2" y1="1407.4" x2="2317.2" y2="1411.4"/>
</g>
<g fill="#FFFFFF"><circle cx="2298.5" cy="1402.8" r="1.9"/><circle cx="2304.7" cy="1402.8" r="1.9"/><circle cx="2310.4" cy="1402.8" r="1.9"/></g>
</svg>
<div class="t" style="left:2334.30px;top:1393.26px;font-size:25.146px;line-height:25.146px;letter-spacing:-0.133px;color:#FFFFFF;font-weight:normal;">Give Feedback</div>
</body></html>
